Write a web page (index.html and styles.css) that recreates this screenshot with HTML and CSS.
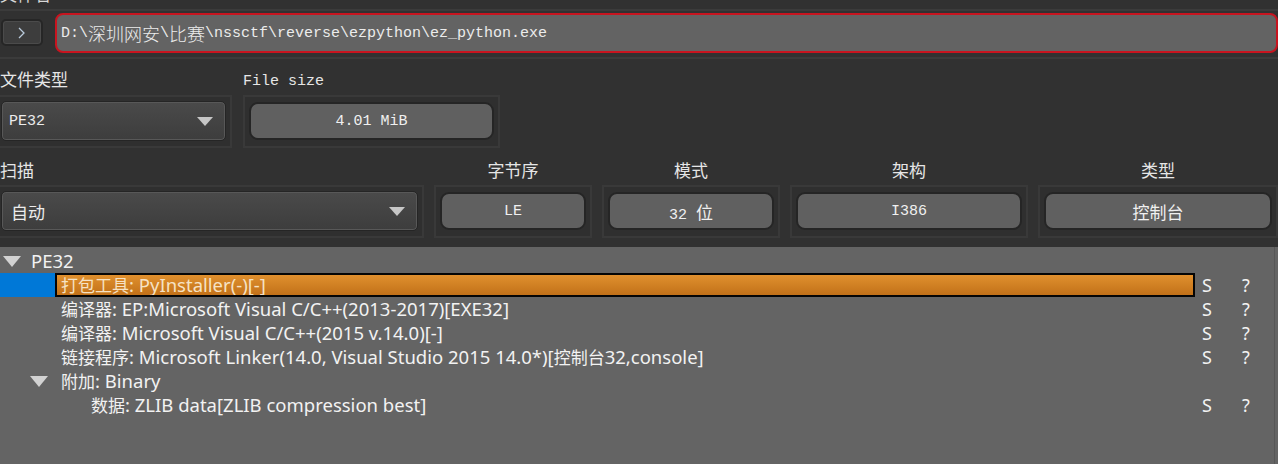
FILE: index.html
```html
<!DOCTYPE html>
<html lang="zh">
<head>
<meta charset="utf-8">
<title>Detect It Easy</title>
<link rel="stylesheet" href="styles.css">
</head>
<body>
<div class="app">
  <div class="cut"><span class="cut-label">文件名</span></div>

  <div class="path-row">
    <div class="go">
      <svg width="10" height="12" viewBox="0 0 10 12"><polyline points="2,1 7,6 2,11" fill="none" stroke="#b9cadb" stroke-width="1.3"/></svg>
    </div>
    <div class="path"><span class="m">D:\</span><span class="c">深圳网安</span><span class="m">\</span><span class="c">比赛</span><span class="m">\nssctf\reverse\ezpython\ez_python.exe</span></div>
  </div>

  <div class="grow">
    <div class="col col-type">
      <div class="lbl">文件类型</div>
      <div class="frame first"><div class="combo w-type"><span class="m">PE32</span><span class="arrow"></span></div></div>
    </div>
    <div class="col col-size">
      <div class="lbl m">File size</div>
      <div class="frame"><div class="btn w-size m">4.01 MiB</div></div>
    </div>
  </div>

  <div class="grow row2">
    <div class="col">
      <div class="lbl lbl2">扫描</div>
      <div class="frame first"><div class="combo w-scan"><span class="c">自动</span><span class="arrow"></span></div></div>
    </div>
    <div class="col center">
      <div class="lbl lbl2">字节序</div>
      <div class="frame"><div class="btn w-le m">LE</div></div>
    </div>
    <div class="col center">
      <div class="lbl lbl2">模式</div>
      <div class="frame"><div class="btn w-mode"><span><span class="m">32&nbsp;</span><span class="c">位</span></span></div></div>
    </div>
    <div class="col center">
      <div class="lbl lbl2">架构</div>
      <div class="frame"><div class="btn w-arch m">I386</div></div>
    </div>
    <div class="col center">
      <div class="lbl lbl2">类型</div>
      <div class="frame"><div class="btn w-kind c">控制台</div></div>
    </div>
  </div>

  <div class="tree">
    <div class="trow">
      <div class="branch lv0"><span class="tri"></span></div>
      <div class="cell">PE32</div>
      <div class="sc"></div><div class="qc"></div>
    </div>
    <div class="trow sel">
      <div class="branch lv1"></div>
      <div class="cell"><span class="tc">打包工具</span>: PyInstaller(-)[-]</div>
      <div class="sc">S</div><div class="qc">?</div>
    </div>
    <div class="trow">
      <div class="branch lv1"></div>
      <div class="cell"><span class="tc">编译器</span>: EP:Microsoft Visual C/C++(2013-2017)[EXE32]</div>
      <div class="sc">S</div><div class="qc">?</div>
    </div>
    <div class="trow">
      <div class="branch lv1"></div>
      <div class="cell"><span class="tc">编译器</span>: Microsoft Visual C/C++(2015 v.14.0)[-]</div>
      <div class="sc">S</div><div class="qc">?</div>
    </div>
    <div class="trow">
      <div class="branch lv1"></div>
      <div class="cell"><span class="tc">链接程序</span>: Microsoft Linker(14.0, Visual Studio 2015 14.0*)[<span class="tc">控制台</span>32,console]</div>
      <div class="sc">S</div><div class="qc">?</div>
    </div>
    <div class="trow">
      <div class="branch lv1"><span class="tri tri1"></span></div>
      <div class="cell"><span class="tc">附加</span>: Binary</div>
      <div class="sc"></div><div class="qc"></div>
    </div>
    <div class="trow">
      <div class="branch lv2"></div>
      <div class="cell"><span class="tc">数据</span>: ZLIB data[ZLIB compression best]</div>
      <div class="sc">S</div><div class="qc">?</div>
    </div>
  </div>
</div>
</body>
</html>
```

FILE: styles.css
```css
* { box-sizing: border-box; }
html, body { margin: 0; padding: 0; }
body {
  background: #313131;
  color: #e8e8e8;
  font-family: "Noto Sans CJK SC", sans-serif;
  width: 1278px;
  height: 464px;
  overflow: hidden;
}
.app { display: flex; flex-direction: column; width: 1278px; }

.m { font-family: "Liberation Mono", monospace; font-size: 15px; }
.c { font-family: "Noto Sans CJK SC", sans-serif; font-size: 17px; }

.cut { height: 9px; overflow: hidden; }
.cut-label { display: block; font-size: 17px; line-height: 20px; margin-top: -16px; color: #d8d8d8; }

.path-row {
  height: 50px;
  border-top: 2px solid #3b3b3b;
  border-bottom: 2px solid #3b3b3b;
  display: flex;
  align-items: flex-start;
}
.go {
  margin: 8px 0 0 1px;
  width: 42px; height: 27px;
  border: 2px solid #262626;
  border-radius: 5px;
  background: #3d3d3d;
  box-shadow: inset 0 0 0 1px #4b4b4b;
  display: flex; align-items: center; justify-content: center;
}
.path {
  margin: 2px 0 0 12px;
  width: 1224px; height: 40px;
  border: 2px solid #c8141f;
  border-radius: 8px;
  background: #636363;
  color: #ececec;
  padding-left: 4px;
  display: flex; align-items: center;
  white-space: nowrap;
}
.path .c { font-size: 18px; font-weight: 300; }

.grow { display: flex; gap: 11px; }
.row2 { gap: 10px; }
.col { display: flex; flex-direction: column; }
.col.center { align-items: center; }
.lbl { height: 36px; padding-top: 10px; line-height: 20px; font-size: 17px; color: #e6e6e6; white-space: nowrap; }
.lbl.m { padding-top: 13px; font-size: 15px; }
.lbl2 { height: 37px; padding-top: 12px; }

.frame {
  height: 53px;
  border: 2px solid #393939;
  padding: 4px 4px 5px 4px;
  background: #2f2f2f;
}
.frame.first { margin-left: -5px; }

.combo {
  height: 40px;
  border: 1px solid #252525;
  border-radius: 5px;
  background: linear-gradient(#4a4a4a, #3d3d3d);
  box-shadow: inset 0 0 0 1px #585858;
  display: flex; align-items: center; justify-content: space-between;
  padding: 0 12px 0 7px;
  color: #ececec;
}
.arrow {
  width: 0; height: 0;
  border-left: 8px solid transparent;
  border-right: 8px solid transparent;
  border-top: 9px solid #c6c6c6;
}
.w-type { width: 225px; }
.w-scan { width: 417px; padding-left: 9px; }

.btn {
  height: 38px; margin-top: 1px;
  border: 2px solid #252525;
  border-radius: 9px;
  background: #606060;
  color: #f0f0f0;
  display: flex; align-items: center; justify-content: center;
  white-space: nowrap;
}
.w-size { width: 245px; }
.w-le { width: 146px; }
.w-mode { width: 166px; }
.w-arch { width: 226px; }
.w-kind { width: 228px; }

.tree {
  margin-top: 9px;
  height: 217px;
  background: #646464;
  padding: 2px 6px 0 0;
  position: relative;
  font-family: "Noto Sans", "Noto Sans CJK SC", sans-serif;
  font-size: 18.5px;
  color: #f2f2f2;
}
.tree::after {
  content: "";
  position: absolute; right: 3px; top: 0; bottom: 0;
  width: 1px; background: #575757;
}
.tc { font-family: "Noto Sans CJK SC", sans-serif; font-size: 17px; }
.trow { display: flex; height: 24px; align-items: stretch; }
.branch { flex: none; display: flex; align-items: center; }
.lv0 { width: 25px; }
.lv1 { width: 55px; }
.lv2 { width: 85px; }
.tri {
  width: 0; height: 0;
  margin-left: 3px;
  border-left: 9px solid transparent;
  border-right: 9px solid transparent;
  border-top: 11px solid #d2d2d2;
}
.tri.tri1 { margin-left: 30px; }
.cell {
  flex: 1; min-width: 0;
  padding-left: 6px;
  line-height: 24px;
  white-space: nowrap;
  overflow: hidden;
}
.sc, .qc { flex: none; line-height: 24px; padding-left: 7px; font-size: 18px; }
.sc { width: 40px; }
.qc { width: 37px; }

.sel .branch { background: #0078d7; }
.sel .cell {
  background: linear-gradient(#e0902e, #c27119);
  border: 2px solid #050505;
  padding-left: 4px;
  line-height: 20px;
  color: #f6e2c4;
}
```
